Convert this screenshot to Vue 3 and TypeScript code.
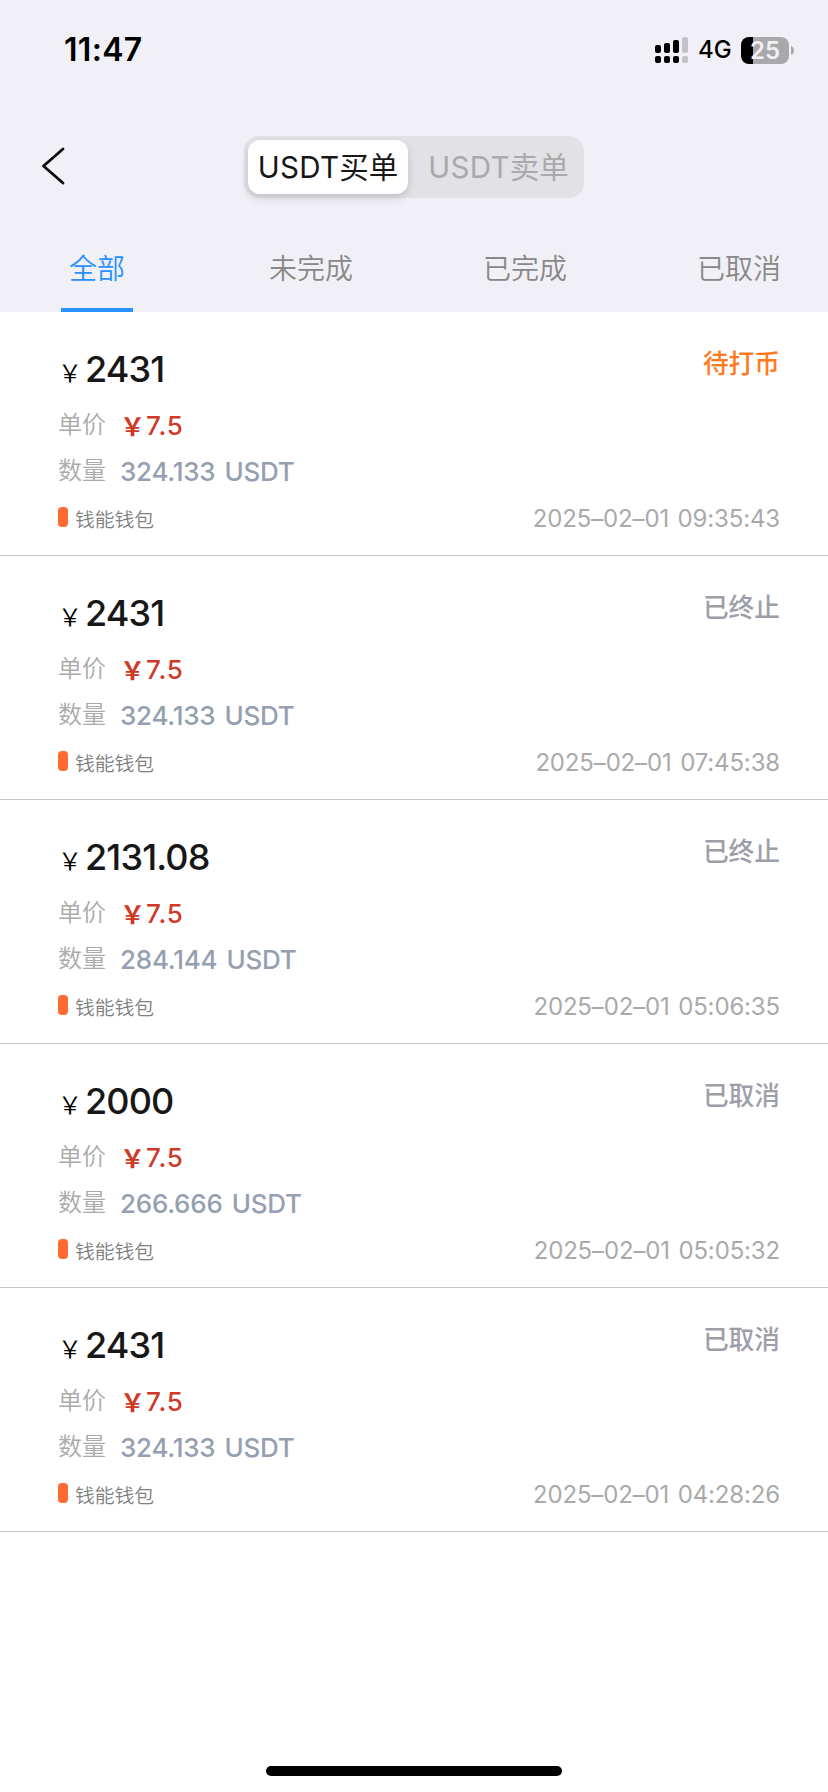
<script setup lang="ts">
import { ref } from 'vue'

interface Order {
  amount: string
  price: string
  count: string
  time: string
  status: string
  pending?: boolean
}

const segments: string[] = ['买单', '卖单']
const activeSegment = ref(0)

const tabs: string[] = ['全部', '未完成', '已完成', '已取消']
const activeTab = ref(0)

const orders: Order[] = [
  { amount: '2431', price: '7.5', count: '324.133', time: '2025–02–01 09:35:43', status: '待打币', pending: true },
  { amount: '2431', price: '7.5', count: '324.133', time: '2025–02–01 07:45:38', status: '已终止' },
  { amount: '2131.08', price: '7.5', count: '284.144', time: '2025–02–01 05:06:35', status: '已终止' },
  { amount: '2000', price: '7.5', count: '266.666', time: '2025–02–01 05:05:32', status: '已取消' },
  { amount: '2431', price: '7.5', count: '324.133', time: '2025–02–01 04:28:26', status: '已取消' },
]
</script>

<template>
  <div class="screen">
    <header class="top">
      <div class="statusbar">
        <span class="clock">11:47</span>
        <div class="indicators">
          <svg class="signal" width="33" height="26" viewBox="0 0 33 26">
            <rect x="0" y="8" width="6" height="8" rx="2" />
            <rect x="9" y="6" width="6" height="10" rx="2" />
            <rect x="18" y="3" width="6" height="13" rx="2" />
            <rect class="faint" x="27" y="0" width="6" height="16" rx="2" />
            <rect x="0" y="19" width="6" height="7" rx="2" />
            <rect x="9" y="19" width="6" height="7" rx="2" />
            <rect x="18" y="19" width="6" height="7" rx="2" />
            <rect class="faint" x="27" y="19" width="6" height="7" rx="2" />
          </svg>
          <span class="network">4G</span>
          <div class="battery"><span>25</span></div>
          <svg class="nub" width="3" height="9" viewBox="0 0 3 9"><path d="M0 0C4 1.5 4 7.5 0 9Z" /></svg>
        </div>
      </div>

      <nav class="navbar">
        <svg class="back" width="24" height="38" viewBox="0 0 24 38">
          <path d="M22 2 L2.5 19 L22 36" />
        </svg>
        <div class="segment">
          <button
            v-for="(name, i) in segments"
            :key="name"
            :class="['seg', { on: i === activeSegment }]"
            @click="activeSegment = i"
          >
            <span class="latin">USDT</span><span class="han">{{ name }}</span>
          </button>
        </div>
      </nav>

      <div class="tabs">
        <button
          v-for="(tab, i) in tabs"
          :key="tab"
          :class="['tab', { on: i === activeTab }]"
          @click="activeTab = i"
        >
          <span>{{ tab }}</span>
        </button>
      </div>
    </header>

    <main class="list">
      <article v-for="order in orders" :key="order.time" class="order">
        <div class="line head">
          <span class="yen">￥</span>
          <span class="amount">{{ order.amount }}</span>
          <span :class="['status', { pending: order.pending }]">{{ order.status }}</span>
        </div>
        <div class="line">
          <span class="label">单价</span>
          <span class="price-yen">￥</span>
          <span class="price">{{ order.price }}</span>
        </div>
        <div class="line">
          <span class="label">数量</span>
          <span class="count">{{ order.count }} USDT</span>
        </div>
        <div class="line">
          <i class="mark"></i>
          <span class="wallet">钱能钱包</span>
          <time class="time">{{ order.time }}</time>
        </div>
      </article>
    </main>

    <div class="home"></div>
  </div>
</template>

<style>
body {
  background: #fff;
}
</style>

<style scoped>
.screen {
  width: 828px;
  height: 1792px;
  display: flex;
  flex-direction: column;
  overflow: hidden;
  background: #fff;
  font-family: Inter, "Noto Sans CJK SC", sans-serif;
}
button {
  border: 0;
  padding: 0;
  background: none;
  font: inherit;
}
.top {
  height: 312px;
  flex: none;
  background: #f1f0f6;
}
.statusbar {
  height: 100px;
  display: flex;
  justify-content: space-between;
  padding: 0 34px 0 64px;
}
.clock {
  font-size: 32px;
  font-weight: 600;
  letter-spacing: 0.3px;
  line-height: 100px;
  color: #000;
}
.indicators {
  display: flex;
  align-items: center;
  height: 100px;
}
.signal .faint {
  fill: #c3c2c8;
}
.network {
  width: 34px;
  margin-left: 10px;
  font-size: 24px;
  font-weight: 500;
  line-height: 102px;
}
.battery {
  width: 48px;
  height: 27px;
  margin-left: 9px;
  border-radius: 8px;
  background: linear-gradient(90deg, #000 12px, #a9a9ab 12px);
  color: #f1f0f6;
  font-size: 24px;
  font-weight: 600;
  line-height: 27px;
  text-align: center;
}
.nub {
  margin-left: 2px;
  fill: #a9a9ab;
}
.navbar {
  height: 134px;
  display: flex;
  align-items: center;
  padding-left: 41px;
}
.back {
  margin-bottom: 2px;
  fill: none;
  stroke: #0a0a0a;
  stroke-width: 2.8;
  stroke-linecap: round;
  stroke-linejoin: round;
}
.segment {
  display: flex;
  width: 340px;
  height: 62px;
  box-sizing: border-box;
  margin-left: 179px;
  padding: 4px;
  border-radius: 15px;
  background: #e2e1e6;
}
.seg {
  display: flex;
  justify-content: center;
  width: 160px;
  height: 54px;
  border-radius: 12px;
  color: #aaa;
  line-height: 55px;
}
.seg + .seg {
  width: 172px;
  padding-left: 9px;
  box-sizing: border-box;
}
.seg.on {
  background: #fff;
  color: #171717;
  box-shadow: 0 4px 10px rgba(0, 0, 0, 0.14);
}
.latin {
  font-size: 29.5px;
  letter-spacing: 0.3px;
}
.han {
  font-family: "Noto Sans CJK SC", sans-serif;
  font-size: 29.5px;
  line-height: 51px;
}
.tabs {
  display: flex;
  height: 78px;
  width: 828px;
  margin-left: -10px;
}
.tab {
  flex: 0 0 214px;
  display: flex;
  justify-content: center;
  font-family: "Noto Sans CJK SC", sans-serif;
  font-size: 28px;
  font-weight: 350;
  line-height: 66px;
  color: #888;
}
.tab span {
  box-sizing: border-box;
  height: 78px;
  padding: 0 8px;
}
.tab.on span {
  border-bottom: 4px solid #2a91ff;
  color: #2a91ff;
}
.order {
  height: 244px;
  box-sizing: border-box;
  padding: 33px 48px 0 58px;
  border-bottom: 1px solid #c6c6c6;
}
.line {
  display: flex;
  height: 46px;
  line-height: 46px;
}
.head {
  height: 48px;
  margin-bottom: 10px;
  line-height: 48px;
}
.yen {
  font-family: "Noto Sans CJK SC", sans-serif;
  font-weight: 350;
  font-size: 24px;
  line-height: 53px;
  width: 27px;
}
.amount {
  font-size: 36px;
  font-weight: 500;
  letter-spacing: -0.85px;
  color: #171717;
}
.status {
  font-family: "Noto Sans CJK SC", sans-serif;
  margin-left: auto;
  font-size: 25.7px;
  font-weight: 500;
  line-height: 34px;
  color: #9d9ea9;
}
.status.pending {
  color: #ff7a1f;
}
.label {
  font-family: "Noto Sans CJK SC", sans-serif;
  font-weight: 350;
  font-size: 24px;
  line-height: 39px;
  width: 62px;
  color: #aaa;
}
.price-yen {
  font-family: "Noto Sans CJK SC", sans-serif;
  font-weight: 700;
  font-size: 25px;
  width: 26px;
  line-height: 44px;
  color: #cf3a28;
}
.price {
  font-size: 26px;
  font-weight: 500;
  letter-spacing: 0.8px;
  color: #cf3a28;
}
.count {
  font-size: 26px;
  font-weight: 500;
  letter-spacing: -0.25px;
  word-spacing: 2.5px;
  color: #94a0b0;
}
.mark {
  width: 10px;
  height: 20px;
  margin-top: 12px;
  border-radius: 4px;
  background: #ff6a33;
}
.wallet {
  font-family: "Noto Sans CJK SC", sans-serif;
  font-weight: 350;
  margin-left: 7px;
  font-size: 19.8px;
  line-height: 48px;
  color: #808080;
}
.time {
  margin-left: auto;
  font-size: 24px;
  line-height: 48px;
  letter-spacing: -0.15px;
  word-spacing: 2px;
  color: #aaa;
}
.home {
  width: 296px;
  height: 10px;
  margin: auto auto 16px;
  border-radius: 5px;
  background: #000;
}
</style>
